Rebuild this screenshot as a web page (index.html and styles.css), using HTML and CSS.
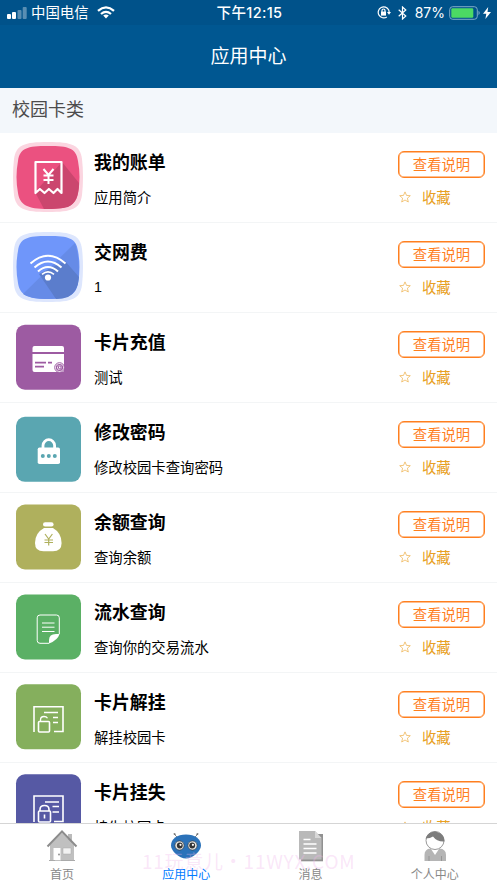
FILE: index.html
```
<!DOCTYPE html>
<html lang="zh-CN">
<head>
<meta charset="utf-8">
<title>应用中心</title>
<link rel="stylesheet" href="styles.css">
</head>
<body>
<div class="app">
  <header class="top">
    <div class="status">
      <div class="status-left">
        <svg class="signal" width="20" height="12" viewBox="0 0 20 12" fill="#fff"><rect x="0" y="7" width="4" height="5" rx="1"/><rect x="5" y="5" width="4" height="7" rx="1"/><g opacity=".35"><rect x="10.5" y="3" width="4" height="9" rx="1"/><rect x="15.7" y="0" width="4" height="12" rx="1"/></g></svg>
        <span class="carrier">中国电信</span>
        <svg class="wifi" width="18" height="13" viewBox="0 0 18 13" fill="none" stroke="#fff" stroke-width="2.3"><path d="M1 4.8Q9-2 17 4.8M4 8Q9 3.7 14 8"/><path d="M6.2 9.6Q9 7.4 11.8 9.6L9 12.6z" fill="#fff" stroke="none"/></svg>
      </div>
      <span class="time">下午12:15</span>
      <div class="status-right">
        <svg width="14" height="13" viewBox="0 0 14 13" fill="none" stroke="#fff" stroke-width="1.2"><path d="M11.700 4A5.500 5.500 0 1 0 9.800 10.900M11.700 4q.5 1.200.4 2.500"/><path d="M10 6h4l-2 2.800z" fill="#fff" stroke="none"/><rect x="4" y="5.600" width="5" height="4" fill="#fff" stroke="none"/><path d="M5 6V4.500a1.500 1.500 0 0 1 3 0V6"/></svg>
        <svg class="bt" width="9" height="14" viewBox="0 0 9 14" fill="none" stroke="#fff" stroke-width="1.2"><path d="M.7 3.8 7.8 10 4.5 13V1L7.800 4 .7 10.300"/></svg>
        <span class="percent">87%</span>
        <svg class="battery" width="32" height="14" viewBox="0 0 32 14"><rect x=".7" y=".7" width="27.600" height="12.600" rx="3" fill="none" stroke="#7fabc8"/><rect x="2.300" y="2.300" width="22" height="9.400" rx="1.200" fill="#4cd964"/><path d="M29.500 4.800Q32 7 29.500 9.200z" fill="#7fabc8"/></svg>
        <svg class="bolt" width="8" height="12" viewBox="0 0 8 12"><path d="M5.200 0 0 6.800h3.300L2.400 12 8 5H4.500z" fill="#fff"/></svg>
      </div>
    </div>
    <h1 class="page-title">应用中心</h1>
  </header>
  <h2 class="section">校园卡类</h2>

  <main class="list">
    <article class="row">
      <svg class="icon" viewBox="0 0 70 70"><path fill="#fbd5e0" d="M35 0C59 0 67 3 69 17Q71 35 69 53C67 67 59 70 35 70S3 67 1 53Q-1 35 1 17C3 3 11 0 35 0z"/><path fill="#eb5180" d="M35 4C56 4 63 6 65 19Q68 35 65 51C63 63 56 67 35 67S7 63 5 51Q2 35 5 19C7 6 14 4 35 4z"/><path fill="#cb466e" d="M49 20 66 41Q66 60 55 65 46 67 31 67L22 50z"/><path fill="none" stroke="#fff" stroke-width="2.2" stroke-linejoin="round" d="M22.5 20h26v31l-4-4-4 4-4.6-4-4.4 4-4.6-4-4.4 4z"/><path fill="none" stroke="#fff" stroke-width="2" d="m30.5 27 5 6 5-6M30.5 33.5h10M30.5 38h10M35.5 33v9"/></svg>
      <div class="info"><h3 class="name">我的账单</h3><p class="desc">应用简介</p></div>
      <div class="actions"><button class="detail">查看说明</button><div class="fav"><svg class="star" viewBox="0 0 12 12"><path d="m6 .9 1.5 3.5 3.8.3-2.9 2.5.9 3.8L6 9l-3.3 2 .9-3.8L.7 4.7l3.8-.3z"/></svg><span>收藏</span></div></div>
    </article>
    <article class="row">
      <svg class="icon" viewBox="0 0 70 70"><path fill="#dde6fd" d="M35 0C59 0 67 3 69 17Q71 35 69 53C67 67 59 70 35 70S3 67 1 53Q-1 35 1 17C3 3 11 0 35 0z"/><path fill="#6f96fa" d="M35 4C56 4 63 6 65 19Q68 35 65 51C63 63 56 67 35 67S7 63 5 51Q2 35 5 19C7 6 14 4 35 4z"/><path fill="#668be7" d="M62 11 10 62Q17 67 35 67 62 67 65 51 68 31 62 11z"/><path fill="#5b7dcc" d="M52 29 66 45Q65 60 55 65 50 67 43 67L26 42z"/><g fill="none" stroke="#fff" stroke-width="2.1"><path d="M17.5 31.5Q35 16 52.5 31.5M21.5 35.5Q35 23.5 48.5 35.5M25 39.5Q35 30.5 45 39.5"/><path d="M29 42.300Q35 37.500 41 42.300" stroke-width="1.600"/></g><circle cx="35" cy="45.5" r="3.1" fill="#fff"/></svg>
      <div class="info"><h3 class="name">交网费</h3><p class="desc latin">1</p></div>
      <div class="actions"><button class="detail">查看说明</button><div class="fav"><svg class="star" viewBox="0 0 12 12"><path d="m6 .9 1.5 3.5 3.8.3-2.9 2.5.9 3.8L6 9l-3.3 2 .9-3.8L.7 4.7l3.8-.3z"/></svg><span>收藏</span></div></div>
    </article>
    <article class="row">
      <svg class="icon" viewBox="0 0 70 70"><rect x="3" y="2.7" width="65" height="65" rx="9" fill="#9d5ba2"/><path fill="#fff" d="M21.5 24h27.5q2 0 2 2v4H19.5v-4q0-2 2-2zM19.5 32H51v16q0 2-2 2H21.5q-2 0-2-2z"/><path stroke="#9d5ba2" stroke-width="1.8" d="M22 40.7h11M35 40.7h4M22 44.6h9"/><circle cx="46.5" cy="45.5" r="4.8" fill="#fff" stroke="#9d5ba2" stroke-width="1"/><circle cx="46.5" cy="45.5" r="3" fill="none" stroke="#9d5ba2" stroke-width="1.2"/><path fill="none" stroke="#9d5ba2" d="M45 44h3v3h-2z"/></svg>
      <div class="info"><h3 class="name">卡片充值</h3><p class="desc">测试</p></div>
      <div class="actions"><button class="detail">查看说明</button><div class="fav"><svg class="star" viewBox="0 0 12 12"><path d="m6 .9 1.5 3.5 3.8.3-2.9 2.5.9 3.8L6 9l-3.3 2 .9-3.8L.7 4.7l3.8-.3z"/></svg><span>收藏</span></div></div>
    </article>
    <article class="row">
      <svg class="icon" viewBox="0 0 70 70"><rect x="3" y="4.8" width="65" height="65" rx="9" fill="#5aa6b1"/><path fill="none" stroke="#fff" stroke-width="2.8" d="M30 36v-2.5a5.8 5.8 0 0 1 11.6 0V36"/><rect x="24.7" y="35.5" width="22.3" height="16.6" rx="1.8" fill="#fff"/><g fill="#5aa6b1"><circle cx="29.8" cy="44" r="2"/><circle cx="35.8" cy="44" r="2"/><circle cx="41.8" cy="44" r="2"/></g></svg>
      <div class="info"><h3 class="name">修改密码</h3><p class="desc">修改校园卡查询密码</p></div>
      <div class="actions"><button class="detail">查看说明</button><div class="fav"><svg class="star" viewBox="0 0 12 12"><path d="m6 .9 1.5 3.5 3.8.3-2.9 2.5.9 3.8L6 9l-3.3 2 .9-3.8L.7 4.7l3.8-.3z"/></svg><span>收藏</span></div></div>
    </article>
    <article class="row">
      <svg class="icon" viewBox="0 0 70 70"><rect x="3" y="2.5" width="65" height="65" rx="9" fill="#afb05d"/><rect x="30" y="20.3" width="10.6" height="4.3" rx="2.1" fill="#fff"/><path fill="#fff" d="M31 26h9Q48.600 31 48.600 41 48.600 49.300 40 49.300H30.500Q22 49.300 22 41 22 31 31 26z"/><path fill="none" stroke="#afb05d" stroke-width="1.2" d="m32 32 3.700 5 3.700-5M31.500 38h8.500M31.500 40.500h8.500M35.700 37v6.500"/></svg>
      <div class="info"><h3 class="name">余额查询</h3><p class="desc">查询余额</p></div>
      <div class="actions"><button class="detail">查看说明</button><div class="fav"><svg class="star" viewBox="0 0 12 12"><path d="m6 .9 1.5 3.5 3.8.3-2.9 2.5.9 3.8L6 9l-3.3 2 .9-3.8L.7 4.7l3.8-.3z"/></svg><span>收藏</span></div></div>
    </article>
    <article class="row">
      <svg class="icon" viewBox="0 0 70 70"><rect x="3" y="2.5" width="65" height="65" rx="9" fill="#5bb065"/><path fill="none" stroke="#fff" stroke-width="1" d="M36 51.300H27q-2.800 0-2.800-2.800V25.800q0-2.800 2.800-2.800h16.500q2.800 0 2.800 2.800V42M29 31h12.500M29 35.200h12.500M29 39.500h12.500"/><path fill="#fff" d="M46.500 42Q45 48 36 51.500V48q0-6 7-6z"/></svg>
      <div class="info"><h3 class="name">流水查询</h3><p class="desc">查询你的交易流水</p></div>
      <div class="actions"><button class="detail">查看说明</button><div class="fav"><svg class="star" viewBox="0 0 12 12"><path d="m6 .9 1.5 3.5 3.8.3-2.9 2.5.9 3.8L6 9l-3.3 2 .9-3.8L.7 4.7l3.8-.3z"/></svg><span>收藏</span></div></div>
    </article>
    <article class="row">
      <svg class="icon" viewBox="0 0 70 70"><rect x="3" y="2.300" width="65" height="65" rx="9" fill="#85af5d"/><g fill="none" stroke="#fff" stroke-width="1.600"><path d="M21 50V24.700h29V49.500h-9M31 30.500h14M40 35.500h5M40 40.500h5"/><rect x="25.500" y="39.500" width="11" height="10.500" rx="1"/><path d="M27.500 39v-1q0-3.500 3.500-3.500 2.500 0 3.500 1.800" stroke-width="1.300"/></g></svg>
      <div class="info"><h3 class="name">卡片解挂</h3><p class="desc">解挂校园卡</p></div>
      <div class="actions"><button class="detail">查看说明</button><div class="fav"><svg class="star" viewBox="0 0 12 12"><path d="m6 .9 1.5 3.5 3.8.3-2.9 2.5.9 3.8L6 9l-3.3 2 .9-3.8L.7 4.7l3.8-.3z"/></svg><span>收藏</span></div></div>
    </article>
    <article class="row">
      <svg class="icon" viewBox="0 0 70 70"><rect x="3" y="2.300" width="65" height="65" rx="9" fill="#5659a4"/><g fill="none" stroke="#fff" stroke-width="1.600"><path d="M21 50V24H50V49.500h-9M32 30h14M39.500 34.500H46M39.500 40H46"/><rect x="25.500" y="39" width="12" height="11" rx="1"/><path d="M27 39v-1.500q0-4 4.500-4t4.500 4V39M31.500 42.500v4"/></g></svg>
      <div class="info"><h3 class="name">卡片挂失</h3><p class="desc">挂失校园卡</p></div>
      <div class="actions"><button class="detail">查看说明</button><div class="fav"><svg class="star" viewBox="0 0 12 12"><path d="m6 .9 1.5 3.5 3.8.3-2.9 2.5.9 3.8L6 9l-3.3 2 .9-3.8L.7 4.7l3.8-.3z"/></svg><span>收藏</span></div></div>
    </article>
  </main>

  <nav class="tabs">
    <a class="tab">
      <svg class="tab-icon" viewBox="0 0 32 32"><path d="M22 4h4v9h-4z" fill="#bbb"/><path d="M4 15 16 3l12 12v16H4z" fill="#c0c0c0"/><path d="m1.500 16.500 14.500-15 14.500 15" fill="none" stroke="#8c8c8c" stroke-width="2"/><path fill="#fff" d="M7.500 18h7v12h-7z"/><path fill="#f2f2f2" stroke="#aaa" stroke-width=".5" d="M17 18h8v6h-8z"/><circle cx="13" cy="24.500" r=".9" fill="#888"/><path stroke="#aaa" d="M3 30.500h6M15 30.500h14"/></svg>
      <span>首页</span>
    </a>
    <a class="tab active">
      <svg class="tab-icon" viewBox="0 0 32 32"><g fill="none" stroke="#888" stroke-width="1"><path d="m8 8-4-4M24 8l4-4"/></g><path fill="#666" d="m3 4 2-1 1 2zM29 4l-2-1-1 2z"/><path fill="#2b72b9" d="M16 4.500C25 4.500 31 9 31 15.500 31 21 23 28.500 16 28.500S1 21 1 15.500C1 9 7 4.500 16 4.500z"/><g fill="#e3e3df" stroke="#333" stroke-width=".6"><circle cx="9.500" cy="15.500" r="4.600"/><circle cx="22.500" cy="15.500" r="4.600"/></g><g fill="#333"><circle cx="9.800" cy="15.500" r="2.900"/><circle cx="22.200" cy="15.500" r="2.900"/></g><g fill="#fff"><circle cx="10.500" cy="14.800" r="1.100"/><circle cx="22.900" cy="14.800" r="1.100"/></g></svg>
      <span>应用中心</span>
    </a>
    <a class="tab">
      <svg class="tab-icon" viewBox="0 0 32 32"><path fill="#919191" d="M6 4h22v27.300H6z"/><path fill="#b9b9b9" d="M4 1h16l6.500 7v21.500H4z"/><path fill="#d8d8d8" d="M20 1v7h6.500z"/><path stroke="#fff" stroke-width="1.300" d="M8.500 9.500h7M8.500 14h13M8.500 18.500h13M8.500 23h13"/></svg>
      <span>消息</span>
    </a>
    <a class="tab">
      <svg class="tab-icon" viewBox="0 0 32 32"><path fill="#b5b5b5" d="M5.500 31v-6q0-6 6-6.500h9q6.500.5 6.500 6.500v6z"/><path fill="#fff" d="m12 19 4 6 4-6z"/><circle cx="16" cy="10.500" r="9" fill="#fff" stroke="#999"/><path fill="#7c7c7c" d="M6.500 8.500A9.700 9.700 0 0 1 25.500 11.500Q18 12 14 6.500 11.500 8.500 6.500 8.500z"/><path stroke="#888" stroke-width=".7" d="M10 26v5M22.500 26v5"/></svg>
      <span>个人中心</span>
    </a>
    <div class="watermark">11玩意儿・11WYX.COM</div>
  </nav>
</div>
</body>
</html>
```
FILE: styles.css
```
* { box-sizing: border-box; }

body {
  margin: 0;
  font-family: "Noto Sans CJK SC", sans-serif;
  color: #000;
  background: #fff;
}

h1, h2, h3, p { margin: 0; font-weight: 400; }
svg { display: block; flex: none; }

.app {
  display: flex;
  flex-direction: column;
  width: 497px;
  height: 883px;
  overflow: hidden;
}

.top { flex: none; height: 88px; background: #005791; color: #fff; }

.status {
  display: grid;
  grid-template-columns: 1fr auto 1fr;
  align-items: center;
  height: 25px;
  padding: 0 6px 0 7px;
  background: #00528a;
}
.status-left, .status-right { display: flex; align-items: center; }
.status-right { justify-content: flex-end; }
.carrier { margin-left: 4px; padding-bottom: 2px; font-size: 14.400px; line-height: 20px; }
.wifi { margin-left: 8px; }
.time { padding-left: 1px; font: 500 14.500px/20px Inter, "Noto Sans CJK SC", sans-serif; letter-spacing: .35px; }
.bt { margin-left: 7px; }
.percent { margin-left: 8px; font: 14px/20px Inter, sans-serif; }
.battery { margin-left: 4px; }
.bolt { margin-left: 2px; }

.page-title { font-size: 19px; line-height: 60px; text-align: center; }

.section {
  flex: none;
  height: 45px;
  padding-left: 12px;
  font-size: 18px;
  line-height: 40px;
  color: #4c4c4c;
  background: #f3f7fb;
}

.list { flex: 1; min-height: 0; overflow: hidden; }

.row {
  display: flex;
  height: 90px;
  padding: 9px 12px 0 13px;
  border-bottom: 1px solid #f3f5f6;
}
.icon { width: 70px; height: 70px; }
.info { flex: 1; margin-left: 11px; }
.name { margin-top: 5px; font-size: 17.900px; line-height: 28px; font-weight: 700; }
.desc { margin-top: 11px; font-size: 14.350px; line-height: 22px; }
.latin { font-family: "Liberation Sans", sans-serif; }

.actions { width: 87px; margin-top: 9px; }
.detail {
  display: block;
  width: 87px;
  height: 27px;
  padding: 0 0 2px;
  border: 1px solid #ff7f1f;
  border-radius: 6px;
  box-shadow: inset 0 0 0 .5px #ff7f1f;
  background: #fff;
  color: #ff7f1f;
  font: 14.350px/23px "Noto Sans CJK SC", sans-serif;
}
.fav {
  display: flex;
  align-items: center;
  gap: 11px;
  margin-top: 8px;
  padding-left: 1px;
  font-size: 14.350px;
  line-height: 22px;
  color: #e8a022;
}
.star { width: 12px; height: 12px; fill: none; stroke: #efb75c; stroke-width: .8; }

.tabs {
  position: relative;
  flex: none;
  display: grid;
  grid-template-columns: repeat(4, 1fr);
  height: 60px;
  border-top: 1px solid #d5d5d5;
  background: #fff;
}
.tab {
  display: flex;
  flex-direction: column;
  align-items: center;
  padding-top: 6px;
  font-size: 12px;
  line-height: 18px;
  color: #888;
}
.tab span { margin-top: 3px; }
.tab-icon { width: 32px; height: 32px; }
.active { color: #007aff; }

.watermark {
  position: absolute;
  left: 142px;
  top: 23px;
  font: 19px/27px "Noto Sans CJK SC", sans-serif;
  letter-spacing: .75px;
  color: rgba(240, 180, 235, .32);
  white-space: nowrap;
}
```
